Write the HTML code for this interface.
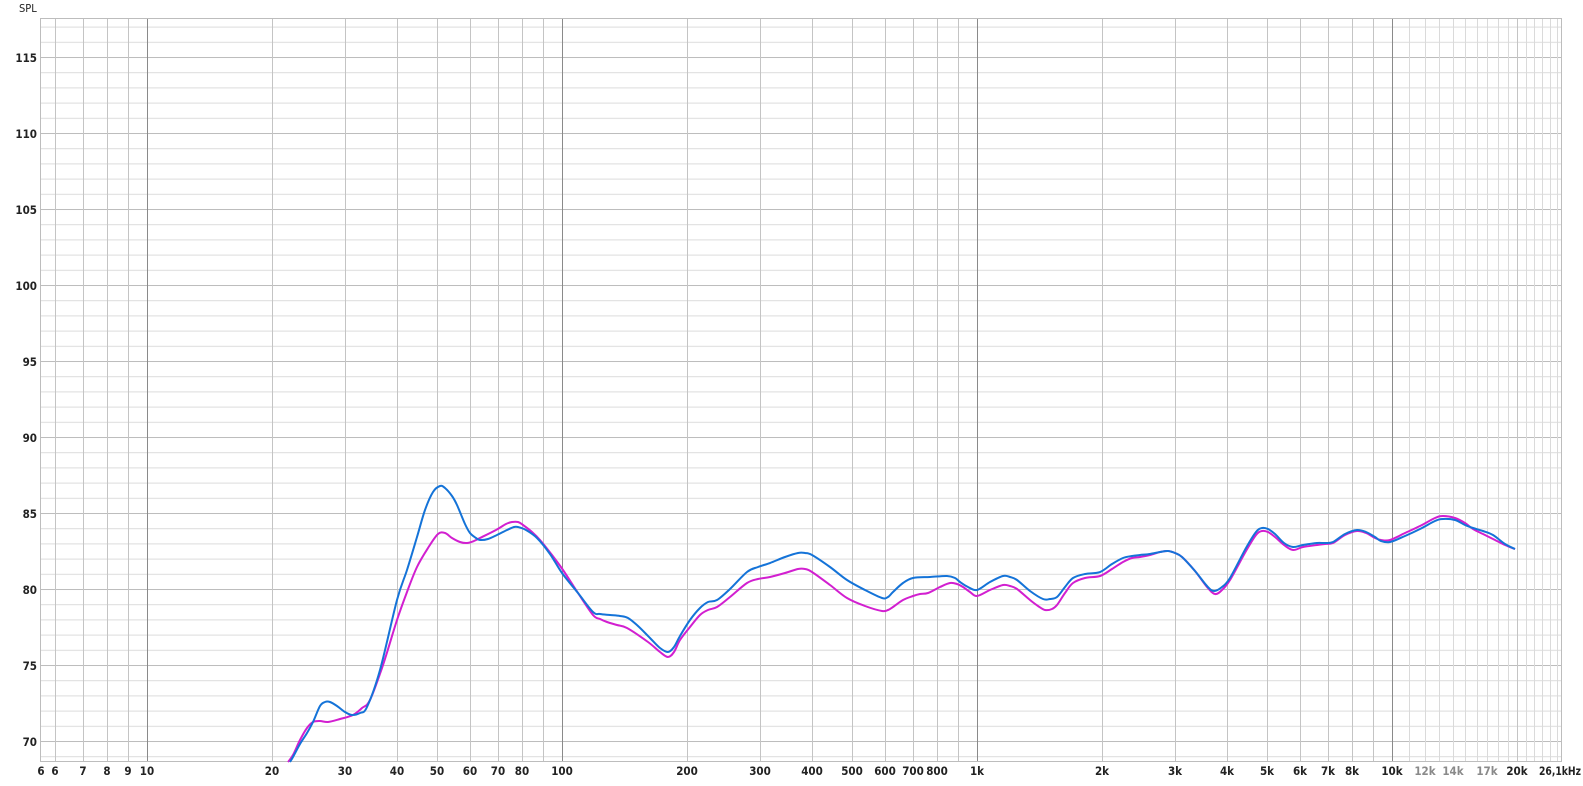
<!DOCTYPE html>
<html><head><meta charset="utf-8"><style>
html,body{margin:0;padding:0;background:#fff;}
svg{display:block;}
text{font-family:"DejaVu Sans Condensed","DejaVu Sans","Liberation Sans",sans-serif;font-stretch:condensed;font-size:11.5px;font-weight:bold;fill:#222;}
</style></head><body>
<svg width="1583" height="786" viewBox="0 0 1583 786" xmlns="http://www.w3.org/2000/svg">
<defs>
<pattern id="hm" patternUnits="userSpaceOnUse" x="0" y="11.4" width="10" height="15.2">
<rect x="0" y="0" width="10" height="1" fill="#dcdcdc"/>
</pattern>
</defs>
<rect x="40" y="18" width="1522" height="744" fill="url(#hm)"/>
<g stroke="#bdbdbd" stroke-width="1">
<line x1="40" x2="1562" y1="57.5" y2="57.5"/>
<line x1="40" x2="1562" y1="133.5" y2="133.5"/>
<line x1="40" x2="1562" y1="209.5" y2="209.5"/>
<line x1="40" x2="1562" y1="285.5" y2="285.5"/>
<line x1="40" x2="1562" y1="361.5" y2="361.5"/>
<line x1="40" x2="1562" y1="437.5" y2="437.5"/>
<line x1="40" x2="1562" y1="513.5" y2="513.5"/>
<line x1="40" x2="1562" y1="589.5" y2="589.5"/>
<line x1="40" x2="1562" y1="665.5" y2="665.5"/>
<line x1="40" x2="1562" y1="741.5" y2="741.5"/>
</g>
<g stroke="#c4c4c4" stroke-width="1">
<line x1="55.5" x2="55.5" y1="18" y2="762"/><line x1="83.5" x2="83.5" y1="18" y2="762"/><line x1="107.5" x2="107.5" y1="18" y2="762"/><line x1="128.5" x2="128.5" y1="18" y2="762"/>
<line x1="272.5" x2="272.5" y1="18" y2="762"/><line x1="345.5" x2="345.5" y1="18" y2="762"/><line x1="397.5" x2="397.5" y1="18" y2="762"/><line x1="437.5" x2="437.5" y1="18" y2="762"/><line x1="470.5" x2="470.5" y1="18" y2="762"/><line x1="498.5" x2="498.5" y1="18" y2="762"/><line x1="522.5" x2="522.5" y1="18" y2="762"/><line x1="543.5" x2="543.5" y1="18" y2="762"/>
<line x1="687.5" x2="687.5" y1="18" y2="762"/><line x1="760.5" x2="760.5" y1="18" y2="762"/><line x1="812.5" x2="812.5" y1="18" y2="762"/><line x1="852.5" x2="852.5" y1="18" y2="762"/><line x1="885.5" x2="885.5" y1="18" y2="762"/><line x1="913.5" x2="913.5" y1="18" y2="762"/><line x1="937.5" x2="937.5" y1="18" y2="762"/><line x1="958.5" x2="958.5" y1="18" y2="762"/>
<line x1="1102.5" x2="1102.5" y1="18" y2="762"/><line x1="1175.5" x2="1175.5" y1="18" y2="762"/><line x1="1227.5" x2="1227.5" y1="18" y2="762"/><line x1="1267.5" x2="1267.5" y1="18" y2="762"/><line x1="1300.5" x2="1300.5" y1="18" y2="762"/><line x1="1328.5" x2="1328.5" y1="18" y2="762"/><line x1="1352.5" x2="1352.5" y1="18" y2="762"/><line x1="1373.5" x2="1373.5" y1="18" y2="762"/>
<line x1="1517.5" x2="1517.5" y1="18" y2="762"/>
</g>
<g stroke="#dadada" stroke-width="1">
<line x1="1409.5" x2="1409.5" y1="18" y2="762"/><line x1="1425.5" x2="1425.5" y1="18" y2="762"/><line x1="1439.5" x2="1439.5" y1="18" y2="762"/><line x1="1453.5" x2="1453.5" y1="18" y2="762"/><line x1="1465.5" x2="1465.5" y1="18" y2="762"/><line x1="1477.5" x2="1477.5" y1="18" y2="762"/><line x1="1487.5" x2="1487.5" y1="18" y2="762"/><line x1="1498.5" x2="1498.5" y1="18" y2="762"/><line x1="1508.5" x2="1508.5" y1="18" y2="762"/><line x1="1526.5" x2="1526.5" y1="18" y2="762"/><line x1="1534.5" x2="1534.5" y1="18" y2="762"/><line x1="1542.5" x2="1542.5" y1="18" y2="762"/><line x1="1550.5" x2="1550.5" y1="18" y2="762"/><line x1="1557.5" x2="1557.5" y1="18" y2="762"/>
</g>
<g stroke="#8a8a8a" stroke-width="1">
<line x1="147.5" x2="147.5" y1="18" y2="762"/><line x1="562.5" x2="562.5" y1="18" y2="762"/><line x1="977.5" x2="977.5" y1="18" y2="762"/><line x1="1392.5" x2="1392.5" y1="18" y2="762"/>
</g>
<rect x="40.5" y="18.5" width="1521" height="743" fill="none" stroke="#bdbdbd"/>

<polyline class="crv" fill="none" stroke="#d21fd0" stroke-width="2" stroke-linejoin="round" points="288,762 293,755 300,740 307,728 313,722 320,721 328,722 340,719 353,715 362,708 370,700 383,665 397,620 407,592 417,567 428,548 438,534 445,533 452,538 460,542 467,543 474,541 480,538 496,530 506,524 512,522 518,522 523,525 532,532 540,540 552,555 563,570 578,593 593,615 600,619 607,622 617,625 627,628 648,642 660,652 668,657 674,652 680,640 690,627 700,615 708,610 717,607 730,597 747,583 758,579 770,577 785,573 798,569 805,569 812,572 830,585 847,598 865,606 882,611 888,610 893,607 903,600 913,596 920,594 928,593 940,587 950,583 957,584 963,587 970,592 977,596 990,590 1003,585 1010,586 1017,589 1030,600 1038,606 1045,610 1052,609 1057,605 1065,593 1073,583 1085,578 1100,576 1112,569 1123,562 1132,558 1140,557 1150,555 1160,552 1168,551 1175,553 1182,557 1195,571 1207,587 1215,594 1222,590 1230,580 1246,551 1256,535 1262,531 1268,532 1275,537 1284,545 1293,550 1303,547 1317,545 1325,544 1333,543 1345,535 1357,531 1366,533 1375,538 1381,540 1390,540 1405,533 1420,526 1435,518 1443,516 1455,518 1465,523 1473,529 1483,534 1493,539 1505,545 1515,549"/>
<polyline class="crv" fill="none" stroke="#1473d8" stroke-width="2" stroke-linejoin="round" points="290,762 293,757 300,744 307,733 313,722 320,706 325,702 330,702 337,706 345,712 352,715 360,713 367,707 380,670 397,600 407,570 417,537 425,510 433,492 440,486 445,488 452,496 457,505 465,524 470,533 476,538 480,540 488,539 497,535 507,530 514,527 518,527 526,530 537,538 550,554 562,573 578,593 593,612 600,614 610,615 620,616 628,618 638,626 650,638 660,648 668,652 674,647 680,636 690,620 700,608 708,602 717,600 730,589 747,572 758,567 770,563 785,557 798,553 805,553 812,555 830,567 847,580 865,590 882,598 888,597 893,592 903,583 913,578 930,577 947,576 955,578 960,582 968,587 977,590 990,582 1003,576 1010,577 1017,580 1030,591 1043,599 1050,599 1057,597 1065,587 1073,578 1085,574 1100,572 1112,564 1123,558 1132,556 1140,555 1150,554 1160,552 1168,551 1175,553 1182,557 1195,571 1207,586 1214,591 1222,587 1230,578 1246,548 1256,532 1262,528 1268,529 1275,534 1284,543 1293,547 1303,545 1317,543 1325,543 1333,542 1345,534 1357,530 1366,532 1375,537 1381,541 1390,542 1405,536 1420,529 1435,521 1443,519 1455,520 1465,525 1473,528 1483,531 1493,535 1505,544 1515,549"/>

<text x="19" y="12" style="font-weight:normal;font-size:11px">SPL</text>
<g text-anchor="end">
<text x="37" y="62">115</text><text x="37" y="138">110</text><text x="37" y="214">105</text><text x="37" y="290">100</text><text x="37" y="366">95</text><text x="37" y="442">90</text><text x="37" y="518">85</text><text x="37" y="594">80</text><text x="37" y="670">75</text><text x="37" y="746">70</text>
</g>
<g text-anchor="middle">
<text x="41" y="775">6</text><text x="55" y="775">6</text><text x="83" y="775">7</text><text x="107" y="775">8</text><text x="128" y="775">9</text><text x="147" y="775">10</text>
<text x="272" y="775">20</text><text x="345" y="775">30</text><text x="397" y="775">40</text><text x="437" y="775">50</text><text x="470" y="775">60</text><text x="498" y="775">70</text><text x="522" y="775">80</text><text x="562" y="775">100</text>
<text x="687" y="775">200</text><text x="760" y="775">300</text><text x="812" y="775">400</text><text x="852" y="775">500</text><text x="885" y="775">600</text><text x="913" y="775">700</text><text x="937" y="775">800</text><text x="977" y="775">1k</text>
<text x="1102" y="775">2k</text><text x="1175" y="775">3k</text><text x="1227" y="775">4k</text><text x="1267" y="775">5k</text><text x="1300" y="775">6k</text><text x="1328" y="775">7k</text><text x="1352" y="775">8k</text><text x="1392" y="775">10k</text>
<text x="1425" y="775" style="fill:#8a8a8a">12k</text><text x="1453" y="775" style="fill:#8a8a8a">14k</text><text x="1487" y="775" style="fill:#8a8a8a">17k</text><text x="1517" y="775">20k</text>
</g>
<text x="1539" y="775" textLength="42" lengthAdjust="spacingAndGlyphs">26,1kHz</text>
</svg>
<script>
document.querySelectorAll('polyline.crv').forEach(function(pl){
  var p=pl.getAttribute('points').trim().split(/\s+/).map(function(s){return s.split(',').map(Number);});
  var d='M'+p[0][0]+','+p[0][1];
  for(var i=0;i<p.length-1;i++){
    var p0=p[i-1]||p[i],p1=p[i],p2=p[i+1],p3=p[i+2]||p2;
    var c1x=p1[0]+(p2[0]-p0[0])/6,c1y=p1[1]+(p2[1]-p0[1])/6;
    var c2x=p2[0]-(p3[0]-p1[0])/6,c2y=p2[1]-(p3[1]-p1[1])/6;
    d+=' C'+c1x.toFixed(2)+','+c1y.toFixed(2)+' '+c2x.toFixed(2)+','+c2y.toFixed(2)+' '+p2[0]+','+p2[1];
  }
  var path=document.createElementNS('http://www.w3.org/2000/svg','path');
  path.setAttribute('d',d);path.setAttribute('fill','none');
  path.setAttribute('stroke',pl.getAttribute('stroke'));path.setAttribute('stroke-width','2');
  pl.parentNode.replaceChild(path,pl);
});
</script>
</body></html>
